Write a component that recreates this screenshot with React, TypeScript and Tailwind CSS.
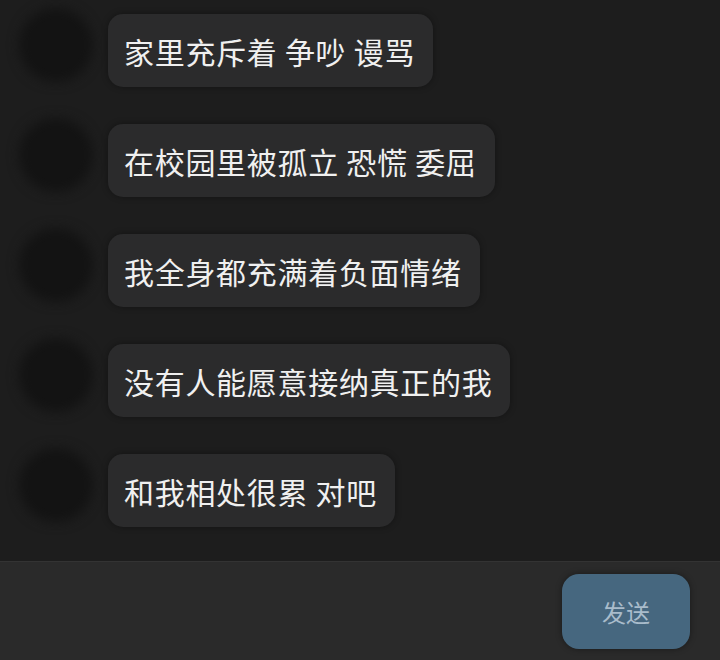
const messages = [
  "家里充斥着 争吵 谩骂",
  "在校园里被孤立 恐慌 委屈",
  "我全身都充满着负面情绪",
  "没有人能愿意接纳真正的我",
  "和我相处很累 对吧",
];

const cjk = { fontFamily: '"Noto Sans CJK SC", "Noto Sans", sans-serif' };

function Row({ text }: { text: string }) {
  return (
    <div className="flex items-start gap-[15px]">
      <div className="w-[74px] h-[74px] -mt-[6px] shrink-0 rounded-full bg-[#131313] blur-[6px]" />
      <div className="h-[73px] flex items-center pl-[16px] pr-[18px] rounded-[15px] bg-[#2b2b2c] shadow-[0_0_6px_rgba(0,0,0,0.35)]">
        <span className="text-[30px] leading-none tracking-[0.7px] text-[#f0f0f0] whitespace-pre">{text}</span>
      </div>
    </div>
  );
}

export default function App() {
  return (
    <div className="w-[720px] h-[660px] overflow-hidden flex flex-col bg-[#1d1d1d]" style={cjk}>
      <div className="h-[561px] shrink-0 flex flex-col gap-[37px] pt-[14px] pl-[19px]">
        {messages.map((m) => (
          <Row key={m} text={m} />
        ))}
      </div>
      <div className="flex-1 border-t border-[#333333] bg-[#2a2a2a] flex justify-end items-start pt-[12px] pr-[30px]">
        <button className="w-[128px] h-[75px] rounded-[17px] bg-[#46677f] text-[24px] text-[#a9bccb] shadow-[0_0_6px_rgba(0,0,0,0.4)]">
          发送
        </button>
      </div>
    </div>
  );
}
